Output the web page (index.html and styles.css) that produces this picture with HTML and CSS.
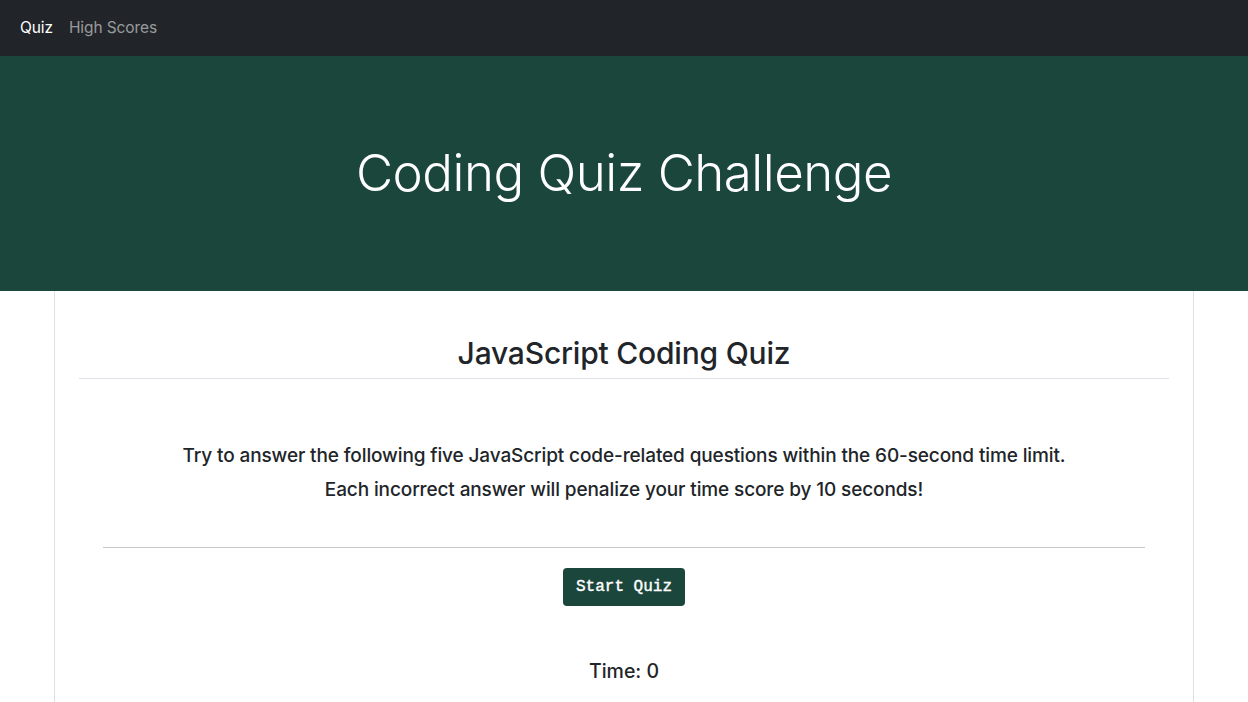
FILE: index.html
```html
<!DOCTYPE html>
<html lang="en">
<head>
<meta charset="utf-8">
<title>Coding Quiz Challenge</title>
<link rel="stylesheet" href="styles.css">
</head>
<body>
<nav class="navbar">
  <a class="nav-link active" href="#">Quiz</a>
  <a class="nav-link" href="#">High Scores</a>
</nav>
<header class="hero">
  <h1 class="hero-title">Coding Quiz Challenge</h1>
</header>
<main class="container">
  <section class="card">
    <h2 class="card-title">JavaScript Coding Quiz</h2>
    <div class="intro">
      <p class="lead">Try to answer the following five JavaScript code-related questions within the 60-second time limit.<br>Each incorrect answer will penalize your time score by 10 seconds!</p>
      <hr class="divider">
      <button class="btn-start" type="button">Start Quiz</button>
      <p class="timer">Time: 0</p>
    </div>
  </section>
</main>
</body>
</html>
```
FILE: styles.css
```css
* { box-sizing: border-box; }
html, body { margin: 0; padding: 0; }
body {
  font-family: Inter, "Noto Sans", "Liberation Sans", sans-serif;
  color: #212529;
  background: #fff;
  font-size: 16px;
  line-height: 1.5;
}
.navbar {
  height: 56px;
  background: #212529;
  display: flex;
  align-items: center;
  padding: 0 12px;
}
.nav-link {
  color: rgba(255,255,255,.55);
  text-decoration: none;
  padding: 8px;
  font-size: 15.5px;
  letter-spacing: -0.1px;
}
.nav-link.active { color: #fff; }
.hero {
  background: #1b463c;
  height: 235px;
  display: flex;
  align-items: center;
  justify-content: center;
}
.hero-title {
  margin: 0;
  color: #fff;
  font-weight: 300;
  font-size: 51px;
  line-height: 1.2;
  letter-spacing: -0.5px;
  padding-bottom: 2px;
}
.container {
  width: 1140px;
  margin: 0 auto;
}
.card {
  border: 1px solid #dee2e6;
  border-top: none;
  padding: 44px 24px 24px;
  min-height: 420px;
}
.card-title {
  margin: 0;
  text-align: center;
  font-size: 30px;
  font-weight: 500;
  line-height: 1.2;
  padding-bottom: 7px;
  border-bottom: 1px solid #dee2e6;
  letter-spacing: -0.2px;
}
.intro {
  padding: 0 24px;
  text-align: center;
}
.lead {
  margin: 60px 0 0;
  font-size: 19px;
  line-height: 34px;
  font-weight: 500;
  letter-spacing: -0.12px;
}
.divider {
  margin: 40px 0 20px;
  border: 0;
  border-top: 1px solid #c8c8c8;
}
.btn-start {
  background: #1b463c;
  color: #fff;
  border: none;
  border-radius: 4px;
  font-family: "Courier New", Courier, "Liberation Mono", monospace;
  font-size: 16px;
  font-weight: 400;
  -webkit-text-stroke: 0.4px #fff;
  padding: 0 13px;
  height: 38px;
  cursor: pointer;
}
.timer {
  margin: 51px 0 0;
  font-size: 19.5px;
  font-weight: 500;
}
```
